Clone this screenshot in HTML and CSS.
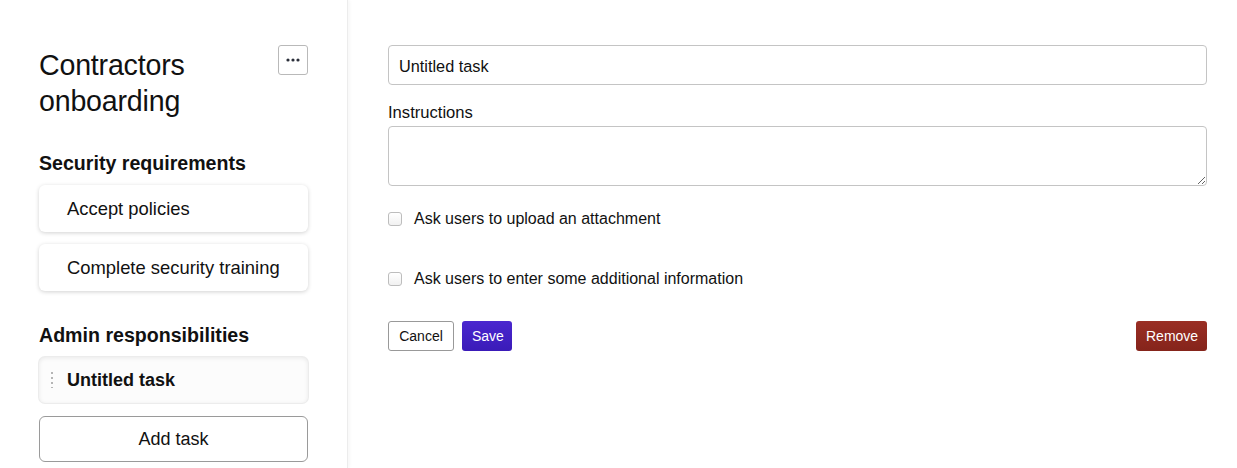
FILE: index.html
```html
<!DOCTYPE html>
<html lang="en">
  <head>
    <meta charset="UTF-8" />
    <title>Contractors onboarding</title>
    <link rel="stylesheet" href="styles.css">
  </head>
  <body>
    <div class="layout">
      <aside class="sidebar">
        <div class="sidebar-header">
          <h1>Contractors onboarding</h1>
          <button class="menu-button" aria-label="More">
            <svg width="14" height="4" viewBox="0 0 14 4">
              <circle cx="2" cy="2" r="1.6" fill="#2b2f3a"></circle>
              <circle cx="7" cy="2" r="1.6" fill="#2b2f3a"></circle>
              <circle cx="12" cy="2" r="1.6" fill="#2b2f3a"></circle>
            </svg>
          </button>
        </div>

        <h2>Security requirements</h2>
        <div class="task-list">
          <div class="task-card">Accept policies</div>
          <div class="task-card">Complete security training</div>
        </div>

        <h2>Admin responsibilities</h2>
        <div class="task-list">
          <div class="task-card active">
            <span class="handle"></span>
            Untitled task
          </div>
        </div>
        <button class="add-task">Add task</button>
      </aside>

      <main class="editor">
        <input class="title-input" type="text" value="Untitled task" />
        <label class="field-label" for="instructions">Instructions</label>
        <textarea id="instructions" class="instructions"></textarea>

        <label class="check-row">
          <input type="checkbox" />
          <span>Ask users to upload an attachment</span>
        </label>
        <label class="check-row">
          <input type="checkbox" />
          <span>Ask users to enter some additional information</span>
        </label>

        <div class="actions">
          <div class="actions-left">
            <button class="btn btn-cancel">Cancel</button>
            <button class="btn btn-save">Save</button>
          </div>
          <button class="btn btn-remove">Remove</button>
        </div>
      </main>
    </div>
  </body>
</html>
```

FILE: styles.css
```css
* {
  margin: 0;
  padding: 0;
  box-sizing: border-box;
}

body {
  font-family: "Liberation Sans", Arial, sans-serif;
  color: #111;
  background: #fff;
}

.layout {
  display: flex;
  min-height: 468px;
}

/* Sidebar */
.sidebar {
  width: 348px;
  flex-shrink: 0;
  padding: 45px 39px 0 39px;
  border-right: 1px solid #ececec;
  box-shadow: 2px 0 3px rgba(0, 0, 0, 0.03);
}

.sidebar-header {
  display: flex;
  justify-content: space-between;
  align-items: flex-start;
  margin-bottom: 33px;
}

.sidebar h1 {
  font-size: 28.6px;
  font-weight: 400;
  line-height: 36px;
  width: 200px;
  margin-top: 2px;
  letter-spacing: -0.2px;
}

.menu-button {
  width: 30px;
  height: 30px;
  border: 1px solid #b9b9b9;
  border-radius: 3px;
  background: #fff;
  display: flex;
  align-items: center;
  justify-content: center;
}

.sidebar h2 {
  font-size: 19.6px;
  font-weight: 700;
  line-height: 22px;
  margin-bottom: 11px;
}

.task-list {
  display: flex;
  flex-direction: column;
  gap: 12px;
  margin-bottom: 33px;
}

.task-card {
  height: 47px;
  display: flex;
  align-items: center;
  padding-left: 28px;
  font-size: 18.4px;
  background: #fff;
  border-radius: 6px;
  box-shadow: 0 1px 4px rgba(0, 0, 0, 0.18);
  position: relative;
}

.task-card.active {
  font-weight: 700;
  font-size: 18px;
  background: #fcfcfc;
  box-shadow: 0 0 0 1px #ececec, inset 0 1px 4px rgba(0, 0, 0, 0.08);
  height: 46px;
}

.task-list:has(.active) {
  margin-bottom: 13px;
}

.handle {
  position: absolute;
  left: 12px;
  top: 15px;
  width: 2px;
  height: 16px;
  background: repeating-linear-gradient(
    to bottom,
    #b5b5b5 0,
    #b5b5b5 2px,
    transparent 2px,
    transparent 5px
  );
}

.add-task {
  width: 100%;
  height: 46px;
  border: 1px solid #9a9a9a;
  border-radius: 6px;
  background: #fff;
  font-family: inherit;
  font-size: 18px;
  color: #111;
}

/* Editor */
.editor {
  flex: 1;
  padding: 45px 30px 0 40px;
  display: flex;
  flex-direction: column;
}

.title-input {
  width: 819px;
  height: 40px;
  border: 1px solid #c4c4c4;
  border-radius: 4px;
  padding: 3px 10px 0;
  font-family: inherit;
  font-size: 16.3px;
  color: #111;
}

.field-label {
  font-size: 16.6px;
  margin-top: 18px;
  line-height: 20px;
  margin-bottom: 3px;
}

.instructions {
  width: 819px;
  height: 60px;
  border: 1px solid #c4c4c4;
  border-radius: 4px;
  font-family: inherit;
  font-size: 16px;
  padding: 8px 10px;
}

.check-row {
  display: flex;
  align-items: center;
  gap: 12px;
  font-size: 16px;
  height: 20px;
  margin-top: 23px;
}

.check-row + .check-row {
  margin-top: 40px;
}

.check-row input {
  width: 14px;
  height: 14px;
  margin: 0;
  appearance: none;
  border: 1px solid #bdbdbd;
  border-radius: 3px;
  background: linear-gradient(#fff, #f1f1f1);
}

.actions {
  width: 819px;
  display: flex;
  justify-content: space-between;
  margin-top: 32px;
}

.actions-left {
  display: flex;
  gap: 8px;
}

.btn {
  height: 30px;
  padding: 0 10px;
  border-radius: 3px;
  font-family: inherit;
  font-size: 14px;
}

.btn-cancel {
  width: 66px;
  background: #fff;
  border: 1px solid #999;
  color: #111;
}

.btn-save {
  width: 50px;
  border: none;
  color: #fff;
  background: linear-gradient(#4a27cf, #3a1bb8);
}

.btn-remove {
  width: 71px;
  border: none;
  color: #fff;
  background: linear-gradient(#9a2e24, #85241b);
}
```
